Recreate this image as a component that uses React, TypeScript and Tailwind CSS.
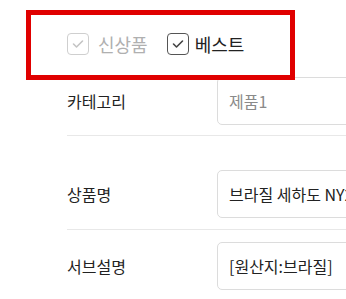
const rows = [
  { label: '카테고리', value: '제품1', muted: true },
  { label: '상품명', value: '브라질 세하도 NY2 FC 스위트 블렌드', muted: false },
  { label: '서브설명', value: '[원산지:브라질]', muted: false },
];

function Check({ disabled }: { disabled?: boolean }) {
  return (
    <span
      className={`flex h-[22px] w-[22px] shrink-0 items-center justify-center rounded-[4px] border ${
        disabled ? 'border-[#cfcfcf]' : 'border-[#555]'
      }`}
    >
      <svg width="12" height="10" viewBox="0 0 12 10" fill="none">
        <path
          d="M1.5 5 L4.5 8 L10.5 2"
          stroke={disabled ? '#c4c4c4' : '#444'}
          strokeWidth="1.6"
          strokeLinecap="round"
          strokeLinejoin="round"
        />
      </svg>
    </span>
  );
}

export default function App() {
  return (
    <div className="relative h-[299px] w-[346px] overflow-hidden bg-white font-['Noto_Sans_CJK_KR',sans-serif]">
      {/* 체크박스 */}
      <div className="flex items-center pl-[67px] pt-[33px]">
        <label className="flex items-center gap-[9px]">
          <Check disabled />
          <span className="text-[18px] leading-[22px] text-[#b0b0b0]">신상품</span>
        </label>
        <label className="ml-[19px] flex items-center gap-[6px]">
          <Check />
          <span className="text-[18px] leading-[22px] text-[#222]">베스트</span>
        </label>
      </div>

      <div className="ml-[67px] mt-[22px]">
        {rows.map((row, i) => (
          <div
            key={row.label}
            className={`flex items-center ${
              i === 0 ? 'pb-[10px]' : i === 1 ? 'pt-[34px] pb-[11px]' : 'pt-[12px]'
            } ${i < rows.length - 1 ? 'border-b border-[#e8e8e8]' : ''}`}
          >
            <div className="w-[150px] shrink-0 whitespace-nowrap text-[16px] text-[#222]">{row.label}</div>
            <div
              className={`flex h-[48px] w-[400px] shrink-0 items-center whitespace-nowrap rounded-[5px] border border-[#dcdcdc] px-[11px] text-[16px] ${
                row.muted ? 'text-[#8a8a8a]' : 'text-[#222]'
              }`}
            >
              {row.value}
            </div>
          </div>
        ))}
      </div>

      <div className="pointer-events-none absolute left-[26px] top-[10px] h-[70px] w-[269px] border-[5px] border-[#e00000]" />
    </div>
  );
}
